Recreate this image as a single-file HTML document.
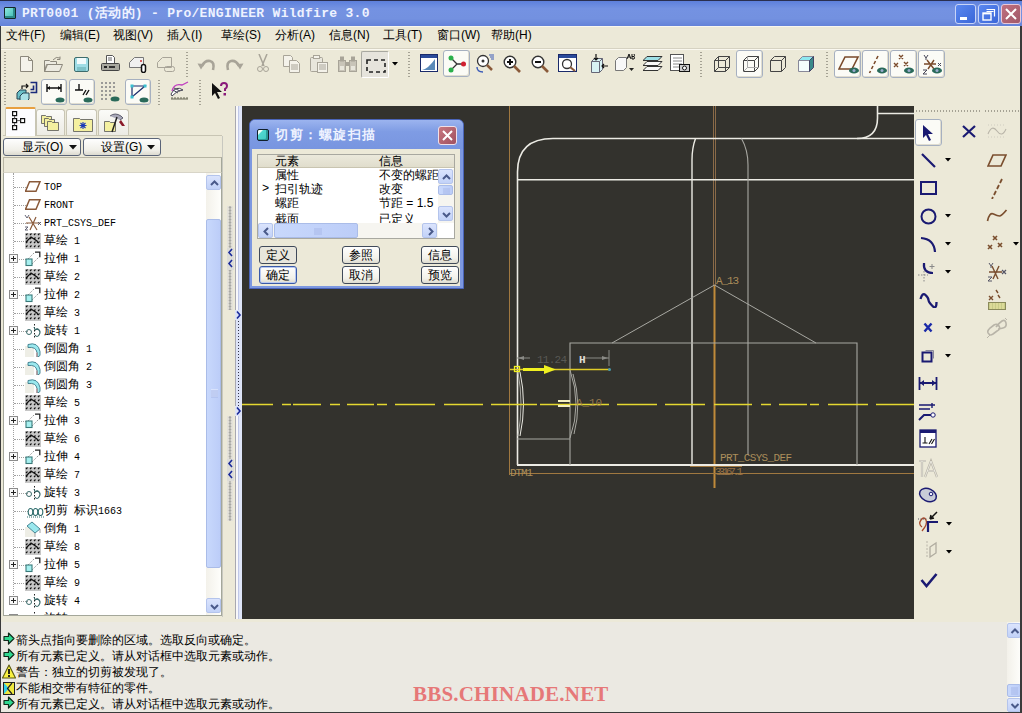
<!DOCTYPE html>
<html><head><meta charset="utf-8">
<style>
*{margin:0;padding:0;box-sizing:border-box}
html,body{width:1022px;height:713px;overflow:hidden;background:#ECE9D8;font-family:"Liberation Sans",sans-serif;font-size:12px;color:#000}
.a{position:absolute}
#title{left:0;top:0;width:1022px;height:26px;background:linear-gradient(#5d80dc,#7492e2 30%,#7391e0 70%,#6482d8);border-top:1px solid #2a2f50}
#title .t{left:22px;top:3px;color:#eef2ff;font-family:"Liberation Mono",monospace;font-weight:bold;font-size:13px;white-space:pre;letter-spacing:0.3px}
#menu{left:0;top:26px;width:1022px;height:22px;background:#ECE9D8}
#menu span{position:absolute;top:1px;font-size:12px}
#canvas{left:242px;top:106px;width:672px;height:513px;background:#33322d;overflow:hidden}
#tree{left:3px;top:173px;width:219px;height:443px;background:#fff;border:1px solid #a4a79a;border-top:none;overflow:hidden}
#msg{left:0;top:620px;width:1022px;height:93px;background:#ECE9D8}
.ti{position:absolute;left:0;height:18px;width:200px;font-size:12px;white-space:pre}
.ti .tx{position:absolute;left:41px;top:2px}
.ml{position:absolute;left:16px;font-size:12px;white-space:pre}
.grip{width:2px;background:repeating-linear-gradient(#a5a294 0 1px,transparent 1px 3px)}
.btp{background:#fbfbf6;border:1px solid #a6b0c0;border-radius:3px;box-shadow:inset -1px -1px 0 #e0ddd0}
.ic svg{display:block}
.ti .hd{position:absolute;left:10px;top:9px;width:14px;border-top:1px dotted #a0a0a0}
.vd{position:absolute;left:9px;top:0;height:432px;border-left:1px dotted #a0a0a0}
.pl{position:absolute;left:5px;top:4px;width:9px;height:9px;border:1px solid #8c8c8c;background:#f8f8f8}
.pl:before{content:"";position:absolute;left:1px;top:3px;width:5px;height:1px;background:#222}
.pl:after{content:"";position:absolute;left:3px;top:1px;width:1px;height:5px;background:#222}
.ti .tx{font-family:"Liberation Mono",monospace;font-size:10px;left:40px;top:4px;line-height:12px}
.sbv{background:linear-gradient(90deg,#f3f1ea,#fefefb)}
.sbb{background:linear-gradient(#dbe4fd,#c2d2f8);border:1px solid #b4c4ec;border-radius:2px}
.sbt{background:linear-gradient(90deg,#c8d8fc,#bccdf8);border:1px solid #aabce8;border-radius:2px}
.tab{background:linear-gradient(#fbfbf8,#ecebe4);border:1px solid #c8c5b4;border-bottom:none;border-radius:3px 3px 0 0}
.btn2{background:linear-gradient(#fefefe,#f0efe8 70%,#dcdad0);border:1px solid #5a6478;border-radius:3px}
.btn2 span{position:absolute;top:0px;font-size:12px;white-space:pre}
.dt{font-size:12px;white-space:pre;line-height:14px}
.dbtn{width:38px;height:18px;background:linear-gradient(#fefefe,#f2f1ea 70%,#dedcd0);border:1px solid #404a5a;border-radius:3px;font-size:12px;text-align:center;line-height:16px}
.grp{background:radial-gradient(circle at 3px 1.5px,#9a9a9a 0 1.3px,#d8d8d4 1.4px) 0 0/6px 3px;border-left:1px solid #c8c8c0}
.cj{font-family:"Liberation Sans",sans-serif;font-size:12px;line-height:0;vertical-align:0}
</style></head><body>
<div id="title" class="a">
  <div class="a" style="left:4px;top:6px;width:12px;height:12px;background:linear-gradient(135deg,#8ee8e0,#3ab8b0);border:1px solid #142828;border-radius:1px;box-shadow:inset -2px -2px 0 #2a8a88"></div>
  <div class="a t">PRT0001 (活动的) - Pro/ENGINEER Wildfire 3.0</div>
  <div class="a" style="left:955px;top:3px;width:21px;height:20px;background:linear-gradient(135deg,#5a88f0,#3a66d8);border:1px solid #c8d4f8;border-radius:3px"><svg width="19" height="18" style="position:absolute;left:0;top:0"><rect x="4" y="12" width="7" height="3" fill="#fff"/></svg></div>
  <div class="a" style="left:978px;top:3px;width:21px;height:20px;background:linear-gradient(135deg,#5a88f0,#3a66d8);border:1px solid #c8d4f8;border-radius:3px"><svg width="19" height="18" style="position:absolute;left:0;top:0"><path d="M7.5 4.5h8v7M7.5 6.5h7" fill="none" stroke="#fff" stroke-width="1.2"/><rect x="4" y="8" width="8" height="7" fill="none" stroke="#fff" stroke-width="1.4"/><path d="M4 8.7h8" stroke="#fff" stroke-width="1.4"/></svg></div>
  <div class="a" style="left:1001px;top:3px;width:20px;height:20px;background:linear-gradient(135deg,#c07080,#a05868);border:1px solid #e8c8d8;border-radius:3px"><svg width="18" height="18" style="position:absolute;left:0;top:0"><path d="M4 4l10 10M14 4l-10 10" stroke="#fff" stroke-width="2"/></svg></div>
</div>
<div id="menu" class="a">
  <span style="left:6px">文件(F)</span>
  <span style="left:60px">编辑(E)</span>
  <span style="left:113px">视图(V)</span>
  <span style="left:167px">插入(I)</span>
  <span style="left:221px">草绘(S)</span>
  <span style="left:275px">分析(A)</span>
  <span style="left:329px">信息(N)</span>
  <span style="left:383px">工具(T)</span>
  <span style="left:437px">窗口(W)</span>
  <span style="left:491px">帮助(H)</span>
</div>

<!-- toolbar row1 -->
<div class="a grip" style="left:4px;top:52px;height:26px"></div>
<div class="a ic" style="left:20px;top:56px"><svg width="14" height="16"><path d="M0.5 0.5h8l4 4v11h-12z M8.5 0.5v4h4" fill="#f4f2ea" stroke="#8c887c"/></svg></div>
<div class="a ic" style="left:44px;top:56px"><svg width="20" height="16"><path d="M0.5 4.5h5l1 1h6v3h-10l-2 7z M0.5 15.5l3-7h15l-3 7z" fill="#eceae0" stroke="#8c887c"/><path d="M9 4q3-4 7-2M16 0.5v3h-3" fill="none" stroke="#8c887c"/></svg></div>
<div class="a ic" style="left:74px;top:57px"><svg width="15" height="15"><rect x="0.5" y="0.5" width="14" height="14" rx="1.5" fill="#9fdde6" stroke="#3e6c6c"/><rect x="3" y="1" width="9" height="6" fill="#f2fbfc"/><rect x="3" y="10" width="9" height="4" fill="#7ec2c8"/></svg></div>
<div class="a ic" style="left:101px;top:55px"><svg width="19" height="17"><path d="M5.5 0.5h6l2 2v6h-8z" fill="#fff" stroke="#555"/><path d="M7 3h4M7 5h4" stroke="#666"/><rect x="0.5" y="8.5" width="18" height="7" rx="1" fill="#a9a9a0" stroke="#444"/><rect x="3" y="11" width="3" height="2" fill="#222"/><rect x="8" y="11" width="6" height="2" fill="#333"/></svg></div>
<div class="a ic" style="left:129px;top:56px"><svg width="19" height="17"><path d="M0.5 6.5l5-5h9v10h-14z" fill="#f0f0f0" stroke="#777"/><circle cx="12" cy="5" r="1" fill="#c33"/><rect x="12.5" y="8.5" width="4" height="8" rx="2" fill="#fff" stroke="#111" stroke-width="1.5"/></svg></div>
<div class="a ic" style="left:157px;top:56px"><svg width="19" height="17"><path d="M0.5 6.5l5-5h9v10h-14z" fill="none" stroke="#a8a498"/><rect x="7.5" y="10.5" width="10" height="5" rx="2" fill="none" stroke="#a8a498"/></svg></div>
<div class="a grip" style="left:186px;top:52px;height:26px"></div>
<div class="a ic" style="left:197px;top:58px"><svg width="19" height="14"><path d="M5 8q3-6 8-5t3 9" fill="none" stroke="#a8a498" stroke-width="2.6"/><path d="M0.5 5.5l7 0.5-3.5 5.5z" fill="#a8a498"/></svg></div>
<div class="a ic" style="left:225px;top:58px"><svg width="19" height="14"><path d="M14 8q-3-6-8-5t-3 9" fill="none" stroke="#a8a498" stroke-width="2.6"/><path d="M18.5 5.5l-7 0.5 3.5 5.5z" fill="#a8a498"/></svg></div>
<div class="a ic" style="left:257px;top:54px"><svg width="12" height="19"><path d="M2 0l5 12M10 0l-5 12" stroke="#a8a498" stroke-width="1.5"/><circle cx="3" cy="15" r="2.5" fill="none" stroke="#a8a498"/><circle cx="9" cy="15" r="2.5" fill="none" stroke="#a8a498"/></svg></div>
<div class="a ic" style="left:283px;top:55px"><svg width="18" height="18"><path d="M0.5 0.5h7l2 2v9h-9z" fill="#f4f2ea" stroke="#a8a498"/><path d="M6.5 5.5h7l3 3v9h-10z" fill="#f4f2ea" stroke="#a8a498"/><path d="M8 10h7M8 12h7M8 14h7" stroke="#a8a498"/></svg></div>
<div class="a ic" style="left:310px;top:55px"><svg width="19" height="18"><rect x="0.5" y="2.5" width="12" height="14" rx="1" fill="#e8e6dc" stroke="#a8a498"/><rect x="3.5" y="0.5" width="6" height="3" fill="#f4f2ea" stroke="#a8a498"/><rect x="7.5" y="7.5" width="10" height="10" fill="#f4f2ea" stroke="#a8a498"/><path d="M9 10h7M9 12h7M9 14h7" stroke="#a8a498"/></svg></div>
<div class="a ic" style="left:338px;top:56px"><svg width="19" height="16"><rect x="0.5" y="4.5" width="7" height="11" fill="#c8c4b8" stroke="#a8a498"/><rect x="11.5" y="4.5" width="7" height="11" fill="#c8c4b8" stroke="#a8a498"/><rect x="2" y="0.5" width="4" height="5" fill="#a8a498"/><rect x="13" y="0.5" width="4" height="5" fill="#a8a498"/><rect x="7" y="6" width="5" height="4" fill="#a8a498"/><rect x="2" y="10" width="4" height="4" fill="#e8e6dc"/><rect x="13" y="10" width="4" height="4" fill="#e8e6dc"/></svg></div>
<div class="a" style="left:361px;top:51px;width:28px;height:27px;background:#e6e4dc;border:1px solid #a8a8a0;border-right-color:#fff;border-bottom-color:#fff;border-radius:2px"></div>
<div class="a ic" style="left:366px;top:59px"><svg width="20" height="14"><rect x="1" y="1" width="18" height="12" fill="none" stroke="#222" stroke-width="1.6" stroke-dasharray="4 3"/></svg></div>
<div class="a ic" style="left:392px;top:62px"><svg width="6" height="4"><path d="M0 0h6l-3 3.5z" fill="#000"/></svg></div>
<div class="a grip" style="left:408px;top:52px;height:26px"></div>
<div class="a ic" style="left:420px;top:54px"><svg width="18" height="18"><rect x="0.5" y="0.5" width="17" height="17" fill="#fff" stroke="#1a2a6a"/><rect x="1" y="1" width="16" height="3" fill="#2a4a9a"/><path d="M2 16q6-1 13-11v11z" fill="#5a8ab8"/><path d="M4 14l2-2M7 12l2-3M10 10l2-3" stroke="#fff"/></svg></div>
<div class="a btp" style="left:443px;top:50px;width:27px;height:27px"></div>
<div class="a ic" style="left:448px;top:55px"><svg width="18" height="18"><path d="M3 3l6 6h8M9 9l-6 6" stroke="#333" stroke-width="1.3" fill="none"/><circle cx="3" cy="3" r="2.5" fill="#2ab04a"/><circle cx="3" cy="15" r="2.5" fill="#2ab04a"/><circle cx="15.5" cy="9" r="2.5" fill="#d02030"/></svg></div>
<div class="a ic" style="left:476px;top:54px"><svg width="20" height="19"><circle cx="7" cy="7" r="5.5" fill="#fff" stroke="#333" stroke-width="1.3"/><path d="M11 11l5 5" stroke="#8a5a3a" stroke-width="2.5"/><circle cx="7" cy="7" r="1.5" fill="#333"/><path d="M13 1h5M14 3h4M15 5h3" stroke="#3a5ab8"/><path d="M1 13q0 5 6 5" fill="none" stroke="#3a5ab8" stroke-width="1.4"/></svg></div>
<div class="a ic" style="left:503px;top:55px"><svg width="18" height="18"><circle cx="7" cy="7" r="5.8" fill="#fff" stroke="#333" stroke-width="1.4"/><path d="M4 7h6M7 4v6" stroke="#111" stroke-width="2"/><path d="M11 11l6 6" stroke="#8a5a3a" stroke-width="2.6"/></svg></div>
<div class="a ic" style="left:531px;top:55px"><svg width="18" height="18"><circle cx="7" cy="7" r="5.8" fill="#fff" stroke="#333" stroke-width="1.4"/><path d="M4 7h6" stroke="#111" stroke-width="2"/><path d="M11 11l6 6" stroke="#8a5a3a" stroke-width="2.6"/></svg></div>
<div class="a ic" style="left:558px;top:54px"><svg width="20" height="18"><rect x="0.5" y="0.5" width="18" height="17" fill="#fff" stroke="#1a2a6a"/><rect x="1" y="1" width="17" height="3" fill="#2a4a9a"/><circle cx="9" cy="10" r="4.5" fill="none" stroke="#333" stroke-width="1.3"/><path d="M12 13l5 4" stroke="#8a5a3a" stroke-width="2.2"/></svg></div>
<div class="a ic" style="left:590px;top:54px"><svg width="19" height="19"><path d="M1.5 7.5l3-3h8v11l-3 3h-8z" fill="#d8f2f4" stroke="#667"/><path d="M1.5 7.5h8v11M9.5 7.5l3-3" fill="none" stroke="#667"/><path d="M6 0v6M4 4l2 2 2-2" stroke="#111" fill="none" stroke-width="1.2"/><path d="M18 12h-6M14 10l-2 2 2 2" stroke="#111" fill="none" stroke-width="1.2"/></svg></div>
<div class="a ic" style="left:615px;top:54px"><svg width="21" height="19"><path d="M0.5 6.5l3-3h8v10l-3 3h-8z" fill="#f8f8f8" stroke="#777"/><path d="M12 5l2-5 2 5M13 3h2M17 0v5h2q1-1 0-2.5h-2M17 2.5h2q1-1 0-2.5" fill="none" stroke="#111" stroke-width="1"/><path d="M14 14h5l-2.5 3z" fill="#222"/></svg></div>
<div class="a ic" style="left:643px;top:56px"><svg width="20" height="16"><path d="M4 0.5h15l-4 4h-15z" fill="#9ee0e6" stroke="#333"/><path d="M4 5.5h15l-4 4h-15z" fill="#f8f8f8" stroke="#333"/><path d="M4 10.5h15l-4 4h-15z" fill="#f8f8f8" stroke="#333"/></svg></div>
<div class="a ic" style="left:670px;top:54px"><svg width="21" height="19"><rect x="0.5" y="0.5" width="13" height="16" fill="#fff" stroke="#555"/><path d="M3 4h9M3 7h9M3 10h9M3 13h9" stroke="#888"/><rect x="9.5" y="10.5" width="10" height="7" fill="#ccc" stroke="#111"/><circle cx="14.5" cy="14" r="2" fill="#fff" stroke="#111"/></svg></div>
<div class="a grip" style="left:700px;top:52px;height:26px"></div>
<div class="a ic" style="left:714px;top:56px"><svg width="16" height="16"><path d="M0.5 4.5h11v11h-11zM4.5 0.5h11v11h-11zM0.5 4.5l4-4M11.5 4.5l4-4M11.5 15.5l4-4M0.5 15.5l4-4" fill="none" stroke="#444"/></svg></div>
<div class="a btp" style="left:736px;top:50px;width:27px;height:28px"></div>
<div class="a ic" style="left:743px;top:56px"><svg width="16" height="16"><path d="M0.5 4.5h11v11h-11zM0.5 4.5l4-4h11v11l-4 4M11.5 4.5l4-4" fill="none" stroke="#444"/><path d="M4.5 0.5v11h11M0.5 15.5l4-4" fill="none" stroke="#aaa"/></svg></div>
<div class="a ic" style="left:770px;top:56px"><svg width="16" height="16"><path d="M0.5 4.5h11v11h-11zM0.5 4.5l4-4h11v11l-4 4M11.5 4.5l4-4" fill="none" stroke="#444"/></svg></div>
<div class="a ic" style="left:798px;top:56px"><svg width="16" height="16"><path d="M0.5 4.5h11v11h-11z" fill="#f4fcfc" stroke="#889"/><path d="M0.5 4.5l4-4h11l-4 4z" fill="#8ee8f0" stroke="#889"/><path d="M11.5 4.5l4-4v11l-4 4z" fill="#3a8a8a" stroke="#446"/></svg></div>
<div class="a grip" style="left:826px;top:52px;height:26px"></div>
<div class="a btp" style="left:834px;top:50px;width:27px;height:28px"></div>
<div class="a btp" style="left:862px;top:50px;width:27px;height:28px"></div>
<div class="a btp" style="left:890px;top:50px;width:27px;height:28px"></div>
<div class="a btp" style="left:918px;top:50px;width:27px;height:28px"></div>
<div class="a ic" style="left:838px;top:55px"><svg width="22" height="20"><path d="M7 2h13l-6 12h-13z" fill="none" stroke="#7a4a2a" stroke-width="1.6"/><ellipse cx="16" cy="15.5" rx="5" ry="3" fill="#2a6a5a"/><circle cx="16" cy="15.5" r="1.5" fill="#9ac"/></svg></div>
<div class="a ic" style="left:866px;top:55px"><svg width="22" height="20"><path d="M12 1l-1.5 3M9.5 6l-1.5 3M7 11l-1.5 3M4.5 16l-1 2" stroke="#7a4a2a" stroke-width="1.6"/><ellipse cx="16" cy="15.5" rx="5" ry="3" fill="#2a6a5a"/><circle cx="16" cy="15.5" r="1.5" fill="#9ac"/></svg></div>
<div class="a ic" style="left:893px;top:54px"><svg width="22" height="21"><path d="M6 1l4 4M10 1l-4 4M1 9l4 4M5 9l-4 4M11 8l4 4M15 8l-4 4" stroke="#7a4a2a" stroke-width="1.4"/><ellipse cx="16" cy="16.5" rx="5" ry="3" fill="#2a6a5a"/><circle cx="16" cy="16.5" r="1.5" fill="#9ac"/></svg></div>
<div class="a ic" style="left:921px;top:54px"><svg width="22" height="21"><path d="M3 1l2 3 2-3M5 4v2" stroke="#445" fill="none"/><path d="M3 10h12M6 6l7 9M13 6l-6 9" stroke="#7a4a2a" stroke-width="1.4"/><path d="M2 16h4l-4 4h4" stroke="#445" fill="none"/><path d="M17 9l3 3M20 9l-3 3" stroke="#445"/><ellipse cx="16" cy="16.5" rx="5" ry="3" fill="#2a6a5a"/><circle cx="16" cy="16.5" r="1.5" fill="#9ac"/></svg></div>
<!-- toolbar row2 -->
<div class="a grip" style="left:4px;top:80px;height:26px"></div>
<div class="a ic" style="left:16px;top:81px"><svg width="22" height="19"><path d="M14.5 1.5h6v10h-6M17.5 4.5v4h-3" fill="none" stroke="#1a2a7a" stroke-width="1.6"/><path d="M6 8v-3h6M10 3l2 2-2 2" stroke="#111" fill="none" stroke-width="1.2"/><path d="M1 12l3-3h6v6l-3 3h-6z" fill="#6ac0c8" stroke="#245"/><path d="M4 15l3-3h6v6l-3 3h-6z" fill="#a8e0e6" stroke="#245"/></svg></div>
<div class="a btp" style="left:41px;top:79px;width:26px;height:26px"></div>
<div class="a btp" style="left:69px;top:79px;width:26px;height:26px"></div>
<div class="a btp" style="left:125px;top:79px;width:26px;height:26px"></div>
<div class="a ic" style="left:46px;top:83px"><svg width="20" height="20"><path d="M1 1v8M15 1v8M1 5h14" stroke="#111" stroke-width="1.4"/><path d="M1 5l3-2v4zM15 5l-3-2v4z" fill="#111"/><ellipse cx="14" cy="17" rx="4.5" ry="2.5" fill="#2a6a5a"/></svg></div>
<div class="a ic" style="left:74px;top:83px"><svg width="20" height="20"><path d="M5 1v6M1 7h8M9 12l3-5M12 12l3-5" stroke="#111" stroke-width="1.4"/><ellipse cx="14" cy="17" rx="4.5" ry="2.5" fill="#2a6a5a"/></svg></div>
<div class="a ic" style="left:101px;top:82px"><svg width="20" height="20"><g fill="#334"><circle cx="1" cy="1" r=".8"/><circle cx="5" cy="1" r=".8"/><circle cx="9" cy="1" r=".8"/><circle cx="13" cy="1" r=".8"/><circle cx="1" cy="5" r=".8"/><circle cx="5" cy="5" r=".8"/><circle cx="9" cy="5" r=".8"/><circle cx="13" cy="5" r=".8"/><circle cx="1" cy="9" r=".8"/><circle cx="5" cy="9" r=".8"/><circle cx="9" cy="9" r=".8"/><circle cx="13" cy="9" r=".8"/><circle cx="1" cy="13" r=".8"/><circle cx="5" cy="13" r=".8"/><circle cx="9" cy="13" r=".8"/><circle cx="1" cy="17" r=".8"/><circle cx="5" cy="17" r=".8"/></g><ellipse cx="14" cy="17" rx="4.5" ry="2.5" fill="#2a6a5a"/></svg></div>
<div class="a ic" style="left:130px;top:83px"><svg width="20" height="20"><path d="M2 3h13L2 14z" fill="none" stroke="#1a2a6a" stroke-width="1.2"/><rect x="0.5" y="1.5" width="3" height="3" fill="#3ac0d0"/><rect x="13.5" y="1.5" width="3" height="3" fill="#3ac0d0"/><rect x="0.5" y="12.5" width="3" height="3" fill="#3ac0d0"/><ellipse cx="14" cy="17" rx="4.5" ry="2.5" fill="#2a6a5a"/></svg></div>
<div class="a grip" style="left:158px;top:80px;height:26px"></div>
<div class="a ic" style="left:170px;top:81px"><svg width="20" height="20"><path d="M2 10q2-8 10-6l6-3" fill="none" stroke="#c040c0" stroke-width="1.3"/><path d="M1 13q5-9 12-4q-6 0-11 6z" fill="#fff" stroke="#445"/><path d="M3 9l5 3M4 7l6 3" stroke="#445"/><path d="M1 18h17M2 16v2M5 16v2M8 16v2M11 16v2M14 16v2M17 16v2" stroke="#665"/></svg></div>
<div class="a grip" style="left:199px;top:80px;height:26px"></div>
<div class="a ic" style="left:211px;top:82px"><svg width="18" height="18"><path d="M1 1v13l3-3 3 6 2-1-3-6h5z" fill="#111"/><path d="M10 4q0-3 3-3t3 3q0 2-2 3v2" fill="none" stroke="#8a1a7a" stroke-width="2"/><rect x="12.5" y="11" width="2.5" height="2.5" fill="#8a1a7a"/></svg></div>

<div class="a" style="left:1px;top:48px;width:1020px;height:1px;background:#d6d2c2"></div><div class="a" style="left:1px;top:49px;width:1020px;height:1px;background:#faf8f0"></div><div class="a" style="left:1px;top:26px;width:1020px;height:1px;background:#f8f6ee"></div>
<div id="canvas" class="a"><svg width="672" height="513" style="position:absolute;left:0;top:0">
<g fill="none" stroke-linecap="butt">
<!-- orange datum lines -->
<path d="M267.5 0V369" stroke="#a07840" stroke-width="1"/>
<path d="M471.5 0V179M473.5 0V179" stroke="#8a6a48" stroke-width="1"/>
<path d="M472.5 179V382" stroke="#c08a3a" stroke-width="2"/>
<path d="M268 367.5H672" stroke="#a07840" stroke-width="1"/>
<path d="M448 360.5H500" stroke="#a07840" stroke-width="1"/>
<!-- white geometry -->
<path d="M275.5 359V66Q275.5 32.5 311 32.5H672" stroke="#ecebe4" stroke-width="1.6"/>
<path d="M275.5 73.69999999999999H672" stroke="#ecebe4" stroke-width="1.5"/>
<path d="M635.5 0V12Q635.5 32.5 615 32.5" stroke="#ecebe4" stroke-width="1.6"/>
<path d="M636 7.5H672" stroke="#ecebe4" stroke-width="1.5"/>
<path d="M453.5 32.5Q450 42 450 54V359" stroke="#ecebe4" stroke-width="1.4"/>
<path d="M499.5 32.5Q506 44 506 59V349" stroke="#a8a8a2" stroke-width="1.1"/>
<path d="M275 359H672" stroke="#ecebe4" stroke-width="1.8"/>
<!-- gray rect & triangle -->
<path d="M328 359V237H615V359" stroke="#a8a8a2" stroke-width="1.1"/>
<path d="M370 237L472.5 179L574 237" stroke="#a8a8a2" stroke-width="1"/>
<path d="M275 333H328" stroke="#a8a8a2" stroke-width="1.1"/>
<!-- profile curves -->
<path d="M276 266Q282 298 276 330" stroke="#a8a8a2" stroke-width="1"/>
<path d="M278 266Q285 298 278 330" stroke="#ecebe4" stroke-width="1"/>
<path d="M328 264Q340 298 328 332" stroke="#a8a8a2" stroke-width="1"/>
<path d="M331 268Q340 298 332 328" stroke="#a8a8a2" stroke-width="1"/>
<!-- centerline -->
<path d="M0 298.5H31M40 298.5H49M51 298.5H79M88 298.5H98M105 298.5H132M135 298.5H145M153 298.5H193M202 298.5H241M249 298.5H295M298 298.5H367M375 298.5H415M423 298.5H463M472 298.5H510M519 298.5H529M537 298.5H565M568 298.5H577M586 298.5H626M634 298.5H672" stroke="#e4d830" stroke-width="1.6"/>
<!-- dimension -->
<path d="M275 252H288M341 252H367M367 244V260" stroke="#8a8a86" stroke-width="1"/>
<path d="M276 252l6 -2v4z M366 252l-6 -2v4z" fill="#8a8a86" stroke="none"/>
<!-- yellow traj arrow -->
<path d="M268 263.5H368" stroke="#e0cc28" stroke-width="1.5"/>
<path d="M281 263.5H306" stroke="#f0f020" stroke-width="3"/>
<path d="M302 259L314 263.5L302 268z" fill="#f0f020" stroke="none"/>
<rect x="272.5" y="260.5" width="5" height="5" stroke="#f0f020" stroke-width="1.3"/>
<circle cx="367.5" cy="263.5" r="1.5" fill="#4a9aaa" stroke="none"/>
<path d="M316 295H328M316 300H328" stroke="#f4f0c0" stroke-width="2"/>
</g>
<g font-family="Liberation Mono, monospace" font-size="11" fill="#b89860" opacity="0.9">
<text x="474" y="178" textLength="23">A_13</text>
<text x="334" y="300" textLength="26" fill="#a08050">A_10</text>
<text x="478" y="355" textLength="72">PRT_CSYS_DEF</text>
<text x="268" y="370" textLength="23">DTM1</text>
<text x="473" y="369" textLength="28" fill="#a07848">33167.1</text>
<text x="295" y="257" textLength="30" fill="#5e5e5a">11.24</text>
<text x="337" y="257" font-weight="bold" fill="#f0f0e8">H</text>
</g>
</svg></div>

<!-- left panel top -->
<div class="a" style="left:3px;top:135px;width:219px;height:1px;background:#c8c5b4"></div>
<div class="a" style="left:5px;top:107px;width:31px;height:29px;background:#fcfcfe;border:1px solid #c8c5b4;border-bottom:none;border-top:2px solid #e8a040;border-radius:2px 2px 0 0"></div>
<div class="a tab" style="left:36px;top:109px;width:29px;height:26px"></div>
<div class="a tab" style="left:66px;top:109px;width:31px;height:26px"></div>
<div class="a tab" style="left:98px;top:109px;width:31px;height:26px"></div>
<div class="a ic" style="left:12px;top:111px"><svg width="14" height="20"><g fill="#fff" stroke="#111" stroke-width="1.2"><rect x="0.6" y="0.6" width="4" height="4"/><rect x="0.6" y="7.6" width="4" height="4"/><rect x="8.6" y="7.6" width="4" height="4"/><rect x="0.6" y="14.6" width="4" height="4"/></g><path d="M2.6 5v2.5M2.6 12v2.5M5 9.6h3.5" stroke="#555"/></svg></div>
<div class="a ic" style="left:41px;top:113px"><svg width="19" height="19"><g stroke="#555" stroke-width=".8"><path d="M0.5 2.5h4l1 1h5v7h-10z" fill="#f4f0a0"/><path d="M3.5 5.5h4l1 1h5v7h-10z" fill="#f4f0a0"/><path d="M6.5 8.5h4l1 1h6v8h-11z" fill="#f4f0a0"/></g></svg></div>
<div class="a ic" style="left:73px;top:116px"><svg width="20" height="16"><path d="M0.5 2.5h6l1 1h12v12h-19z" fill="#f4f0a0" stroke="#555" stroke-width=".8"/><path d="M10 6v7M6.5 9.5h7M7.5 7l5 5M12.5 7l-5 5" stroke="#1a3ab8" stroke-width="1.1"/></svg></div>
<div class="a ic" style="left:104px;top:113px"><svg width="22" height="20"><path d="M0.5 8.5h5l1 1h5v9h-11z" fill="#f4f0a0" stroke="#555" stroke-width=".8"/><path d="M6 3q5-4 11 0l2 2-3 2" fill="#a8a8b8" stroke="#445" stroke-width=".8"/><path d="M13 4l-5 15" stroke="#222" stroke-width="1.5"/><path d="M17 7l4 6h-3l-3-4z" fill="#8a1a2a"/></svg></div>
<div class="a btn2" style="left:3px;top:138px;width:78px;height:18px"><span style="left:18px">显示(O)</span><svg style="position:absolute;left:65px;top:6px" width="8" height="5"><path d="M0 0h8l-4 4.5z" fill="#111"/></svg></div>
<div class="a btn2" style="left:83px;top:138px;width:78px;height:18px"><span style="left:17px">设置(G)</span><svg style="position:absolute;left:63px;top:6px" width="8" height="5"><path d="M0 0h8l-4 4.5z" fill="#111"/></svg></div>
<div class="a" style="left:3px;top:157px;width:219px;height:16px;background:#ebe8d8;border:1px solid #b8b5a4;border-bottom:1px solid #d8d5c8;border-right:1px solid #a4a79a"></div>
<!-- sash -->
<div class="a" style="left:222px;top:136px;width:1px;height:481px;background:#c8c8c0"></div>
<div class="a" style="left:235px;top:106px;width:1px;height:513px;background:#a8a8b0"></div>
<div class="a" style="left:236px;top:106px;width:2px;height:513px;background:#f8f8fa"></div>
<div class="a" style="left:238px;top:106px;width:1px;height:513px;background:#c0c8e8"></div>
<div class="a" style="left:239px;top:106px;width:3px;height:513px;background:#dfe5f8"></div>
<svg class="a" style="left:227px;top:206px" width="6" height="104"><defs><pattern id="gp206" width="6" height="3" patternUnits="userSpaceOnUse"><rect width="6" height="3" fill="#e4e2da"/><circle cx="3" cy="1.5" r="1.3" fill="#a8a8a4"/></pattern></defs><rect width="6" height="104" fill="url(#gp206)"/></svg>
<svg class="a" style="left:227px;top:416px" width="6" height="105"><defs><pattern id="gp416" width="6" height="3" patternUnits="userSpaceOnUse"><rect width="6" height="3" fill="#e4e2da"/><circle cx="3" cy="1.5" r="1.3" fill="#a8a8a4"/></pattern></defs><rect width="6" height="105" fill="url(#gp416)"/></svg>
<div class="a" style="left:236px;top:318px;width:5px;height:88px;background:#dce2f6"></div>
<div class="a" style="left:238px;top:318px;width:1px;height:88px;background:repeating-linear-gradient(#334 0 1px,transparent 1px 3px)"></div>
<svg class="a" style="left:226px;top:248px" width="9" height="22"><rect x="1" y="0" width="7" height="22" fill="#dcdcd8"/><path d="M6 1l-3 3.5 3 3.5M6 12l-3 3.5 3 3.5" fill="none" stroke="#1a2a9a" stroke-width="1.6"/></svg>
<svg class="a" style="left:226px;top:459px" width="9" height="22"><rect x="1" y="0" width="7" height="22" fill="#dcdcd8"/><path d="M6 1l-3 3.5 3 3.5M6 12l-3 3.5 3 3.5" fill="none" stroke="#1a2a9a" stroke-width="1.6"/></svg>
<svg class="a" style="left:235px;top:310px" width="7" height="10"><rect width="7" height="10" fill="#dce2f6"/><path d="M2 1.5l3 3.5-3 3.5" fill="none" stroke="#1a2a9a" stroke-width="1.6"/></svg>
<svg class="a" style="left:235px;top:406px" width="7" height="10"><rect width="7" height="10" fill="#dce2f6"/><path d="M2 1.5l3 3.5-3 3.5" fill="none" stroke="#1a2a9a" stroke-width="1.6"/></svg>
<div id="tree" class="a"><div class="vd"></div><div class="ti" style="top:5px"><div class="hd"></div><div class="a" style="left:21px;top:3px"><svg width="16" height="11"><path d="M4.5 0.8h10.5l-4 9.4h-10.5z" fill="none" stroke="#8a5a3a" stroke-width="1.5"/></svg></div><div class="tx">TOP</div></div><div class="ti" style="top:23px"><div class="hd"></div><div class="a" style="left:21px;top:3px"><svg width="16" height="11"><path d="M4.5 0.8h10.5l-4 9.4h-10.5z" fill="none" stroke="#8a5a3a" stroke-width="1.5"/></svg></div><div class="tx">FRONT</div></div><div class="ti" style="top:41px"><div class="hd"></div><div class="a" style="left:20px;top:1px"><svg width="18" height="16"><path d="M2 8h14M5 2l8 13M12 2l-6 13" stroke="#8a5a3a" stroke-width="1.2"/><path d="M1 0l2 3 2-3M14 7l3 3M17 7l-3 3M1 12h3l-3 3h3" stroke="#556" fill="none" stroke-width=".9"/></svg></div><div class="tx">PRT_CSYS_DEF</div></div><div class="ti" style="top:59px"><div class="hd"></div><div class="a" style="left:21px;top:1px"><svg width="16" height="16"><rect width="16" height="16" fill="#c6c6c6"/><path d="M1 2l1.5-1.5M5 2l1.5-1.5M9 2l1.5-1.5M13 2l1.5-1.5M1 6l1.5-1.5M5 6l1.5-1.5M9 6l1.5-1.5M13 6l1.5-1.5M1 10l1.5-1.5M5 10l1.5-1.5M9 10l1.5-1.5M13 10l1.5-1.5M1 14l1.5-1.5M5 14l1.5-1.5M9 14l1.5-1.5M13 14l1.5-1.5" stroke="#111" stroke-width="1.1"/><path d="M1 9l5-5 6 4 1 2" fill="none" stroke="#111" stroke-width="1.3"/></svg></div><div class="tx"><span class="cj">草绘</span> 1</div></div><div class="ti" style="top:77px"><div class="hd"></div><div class="pl"></div><div class="a" style="left:21px;top:1px"><svg width="18" height="16"><path d="M3 8l6-6M7 13l7-7" fill="none" stroke="#888" stroke-dasharray="1.2 1.2"/><path d="M10 1.2h4.8v5" fill="none" stroke="#222" stroke-width="1.3"/><rect x="1" y="8" width="6" height="6.5" fill="#a8f0f0" stroke="#3a7a7a" stroke-width="1.1"/></svg></div><div class="tx"><span class="cj">拉伸</span> 1</div></div><div class="ti" style="top:95px"><div class="hd"></div><div class="a" style="left:21px;top:1px"><svg width="16" height="16"><rect width="16" height="16" fill="#c6c6c6"/><path d="M1 2l1.5-1.5M5 2l1.5-1.5M9 2l1.5-1.5M13 2l1.5-1.5M1 6l1.5-1.5M5 6l1.5-1.5M9 6l1.5-1.5M13 6l1.5-1.5M1 10l1.5-1.5M5 10l1.5-1.5M9 10l1.5-1.5M13 10l1.5-1.5M1 14l1.5-1.5M5 14l1.5-1.5M9 14l1.5-1.5M13 14l1.5-1.5" stroke="#111" stroke-width="1.1"/><path d="M1 9l5-5 6 4 1 2" fill="none" stroke="#111" stroke-width="1.3"/></svg></div><div class="tx"><span class="cj">草绘</span> 2</div></div><div class="ti" style="top:113px"><div class="hd"></div><div class="pl"></div><div class="a" style="left:21px;top:1px"><svg width="18" height="16"><path d="M3 8l6-6M7 13l7-7" fill="none" stroke="#888" stroke-dasharray="1.2 1.2"/><path d="M10 1.2h4.8v5" fill="none" stroke="#222" stroke-width="1.3"/><rect x="1" y="8" width="6" height="6.5" fill="#a8f0f0" stroke="#3a7a7a" stroke-width="1.1"/></svg></div><div class="tx"><span class="cj">拉伸</span> 2</div></div><div class="ti" style="top:131px"><div class="hd"></div><div class="a" style="left:21px;top:1px"><svg width="16" height="16"><rect width="16" height="16" fill="#c6c6c6"/><path d="M1 2l1.5-1.5M5 2l1.5-1.5M9 2l1.5-1.5M13 2l1.5-1.5M1 6l1.5-1.5M5 6l1.5-1.5M9 6l1.5-1.5M13 6l1.5-1.5M1 10l1.5-1.5M5 10l1.5-1.5M9 10l1.5-1.5M13 10l1.5-1.5M1 14l1.5-1.5M5 14l1.5-1.5M9 14l1.5-1.5M13 14l1.5-1.5" stroke="#111" stroke-width="1.1"/><path d="M1 9l5-5 6 4 1 2" fill="none" stroke="#111" stroke-width="1.3"/></svg></div><div class="tx"><span class="cj">草绘</span> 3</div></div><div class="ti" style="top:149px"><div class="hd"></div><div class="pl"></div><div class="a" style="left:21px;top:2px"><svg width="18" height="14"><path d="M9.5 0v14" stroke="#222" stroke-dasharray="1.5 1.5"/><circle cx="4" cy="8" r="2.5" fill="none" stroke="#3a6a6a"/><path d="M10 6q2-2 4 0t0 5-4 0" fill="none" stroke="#3a6a6a" stroke-width="1.2"/><path d="M9 3l1 3 3-1" fill="none" stroke="#3a6a6a"/></svg></div><div class="tx"><span class="cj">旋转</span> 1</div></div><div class="ti" style="top:167px"><div class="hd"></div><div class="a" style="left:21px;top:1px"><svg width="17" height="16"><rect x="0" y="5" width="9" height="11" fill="#eeeee6"/><path d="M3 3.5q10-3 12 7l0 4-3 2 0-5q-1-6-9-5z" fill="#9ae8ee" stroke="#3a7a8a" stroke-width=".9"/><path d="M12 11.5v4.5" stroke="#c08080" stroke-width="1"/></svg></div><div class="tx"><span class="cj">倒圆角</span> 1</div></div><div class="ti" style="top:185px"><div class="hd"></div><div class="a" style="left:21px;top:1px"><svg width="17" height="16"><rect x="0" y="5" width="9" height="11" fill="#eeeee6"/><path d="M3 3.5q10-3 12 7l0 4-3 2 0-5q-1-6-9-5z" fill="#9ae8ee" stroke="#3a7a8a" stroke-width=".9"/><path d="M12 11.5v4.5" stroke="#c08080" stroke-width="1"/></svg></div><div class="tx"><span class="cj">倒圆角</span> 2</div></div><div class="ti" style="top:203px"><div class="hd"></div><div class="a" style="left:21px;top:1px"><svg width="17" height="16"><rect x="0" y="5" width="9" height="11" fill="#eeeee6"/><path d="M3 3.5q10-3 12 7l0 4-3 2 0-5q-1-6-9-5z" fill="#9ae8ee" stroke="#3a7a8a" stroke-width=".9"/><path d="M12 11.5v4.5" stroke="#c08080" stroke-width="1"/></svg></div><div class="tx"><span class="cj">倒圆角</span> 3</div></div><div class="ti" style="top:221px"><div class="hd"></div><div class="a" style="left:21px;top:1px"><svg width="16" height="16"><rect width="16" height="16" fill="#c6c6c6"/><path d="M1 2l1.5-1.5M5 2l1.5-1.5M9 2l1.5-1.5M13 2l1.5-1.5M1 6l1.5-1.5M5 6l1.5-1.5M9 6l1.5-1.5M13 6l1.5-1.5M1 10l1.5-1.5M5 10l1.5-1.5M9 10l1.5-1.5M13 10l1.5-1.5M1 14l1.5-1.5M5 14l1.5-1.5M9 14l1.5-1.5M13 14l1.5-1.5" stroke="#111" stroke-width="1.1"/><path d="M1 9l5-5 6 4 1 2" fill="none" stroke="#111" stroke-width="1.3"/></svg></div><div class="tx"><span class="cj">草绘</span> 5</div></div><div class="ti" style="top:239px"><div class="hd"></div><div class="pl"></div><div class="a" style="left:21px;top:1px"><svg width="18" height="16"><path d="M3 8l6-6M7 13l7-7" fill="none" stroke="#888" stroke-dasharray="1.2 1.2"/><path d="M10 1.2h4.8v5" fill="none" stroke="#222" stroke-width="1.3"/><rect x="1" y="8" width="6" height="6.5" fill="#a8f0f0" stroke="#3a7a7a" stroke-width="1.1"/></svg></div><div class="tx"><span class="cj">拉伸</span> 3</div></div><div class="ti" style="top:257px"><div class="hd"></div><div class="a" style="left:21px;top:1px"><svg width="16" height="16"><rect width="16" height="16" fill="#c6c6c6"/><path d="M1 2l1.5-1.5M5 2l1.5-1.5M9 2l1.5-1.5M13 2l1.5-1.5M1 6l1.5-1.5M5 6l1.5-1.5M9 6l1.5-1.5M13 6l1.5-1.5M1 10l1.5-1.5M5 10l1.5-1.5M9 10l1.5-1.5M13 10l1.5-1.5M1 14l1.5-1.5M5 14l1.5-1.5M9 14l1.5-1.5M13 14l1.5-1.5" stroke="#111" stroke-width="1.1"/><path d="M1 9l5-5 6 4 1 2" fill="none" stroke="#111" stroke-width="1.3"/></svg></div><div class="tx"><span class="cj">草绘</span> 6</div></div><div class="ti" style="top:275px"><div class="hd"></div><div class="pl"></div><div class="a" style="left:21px;top:1px"><svg width="18" height="16"><path d="M3 8l6-6M7 13l7-7" fill="none" stroke="#888" stroke-dasharray="1.2 1.2"/><path d="M10 1.2h4.8v5" fill="none" stroke="#222" stroke-width="1.3"/><rect x="1" y="8" width="6" height="6.5" fill="#a8f0f0" stroke="#3a7a7a" stroke-width="1.1"/></svg></div><div class="tx"><span class="cj">拉伸</span> 4</div></div><div class="ti" style="top:293px"><div class="hd"></div><div class="a" style="left:21px;top:1px"><svg width="16" height="16"><rect width="16" height="16" fill="#c6c6c6"/><path d="M1 2l1.5-1.5M5 2l1.5-1.5M9 2l1.5-1.5M13 2l1.5-1.5M1 6l1.5-1.5M5 6l1.5-1.5M9 6l1.5-1.5M13 6l1.5-1.5M1 10l1.5-1.5M5 10l1.5-1.5M9 10l1.5-1.5M13 10l1.5-1.5M1 14l1.5-1.5M5 14l1.5-1.5M9 14l1.5-1.5M13 14l1.5-1.5" stroke="#111" stroke-width="1.1"/><path d="M1 9l5-5 6 4 1 2" fill="none" stroke="#111" stroke-width="1.3"/></svg></div><div class="tx"><span class="cj">草绘</span> 7</div></div><div class="ti" style="top:311px"><div class="hd"></div><div class="pl"></div><div class="a" style="left:21px;top:2px"><svg width="18" height="14"><path d="M9.5 0v14" stroke="#222" stroke-dasharray="1.5 1.5"/><circle cx="4" cy="8" r="2.5" fill="none" stroke="#3a6a6a"/><path d="M10 6q2-2 4 0t0 5-4 0" fill="none" stroke="#3a6a6a" stroke-width="1.2"/><path d="M9 3l1 3 3-1" fill="none" stroke="#3a6a6a"/></svg></div><div class="tx"><span class="cj">旋转</span> 3</div></div><div class="ti" style="top:329px"><div class="hd"></div><div class="a" style="left:18px;top:5px"><svg width="24" height="12"><g fill="none" stroke="#2a6a6a" stroke-width="1.1"><ellipse cx="8.5" cy="5" rx="2.3" ry="3.5"/><ellipse cx="13.5" cy="5" rx="2.3" ry="3.5"/><ellipse cx="18.5" cy="5" rx="2.3" ry="3.5"/></g><path d="M5 10h17" stroke="#2a6a6a" stroke-dasharray="1 1"/></svg></div><div class="tx"><span class="cj">切剪</span> <span class="cj">标识</span>1663</div></div><div class="ti" style="top:347px"><div class="hd"></div><div class="a" style="left:21px;top:1px"><svg width="17" height="16"><rect x="0" y="6" width="10" height="10" fill="#eeeee6"/><path d="M2 5l5-4 8 7-5 4z" fill="#9ae8ee" stroke="#3a7a8a" stroke-width=".9"/><path d="M10 12v4M15 8v4" stroke="#a0a0a0"/></svg></div><div class="tx"><span class="cj">倒角</span> 1</div></div><div class="ti" style="top:365px"><div class="hd"></div><div class="a" style="left:21px;top:1px"><svg width="16" height="16"><rect width="16" height="16" fill="#c6c6c6"/><path d="M1 2l1.5-1.5M5 2l1.5-1.5M9 2l1.5-1.5M13 2l1.5-1.5M1 6l1.5-1.5M5 6l1.5-1.5M9 6l1.5-1.5M13 6l1.5-1.5M1 10l1.5-1.5M5 10l1.5-1.5M9 10l1.5-1.5M13 10l1.5-1.5M1 14l1.5-1.5M5 14l1.5-1.5M9 14l1.5-1.5M13 14l1.5-1.5" stroke="#111" stroke-width="1.1"/><path d="M1 9l5-5 6 4 1 2" fill="none" stroke="#111" stroke-width="1.3"/></svg></div><div class="tx"><span class="cj">草绘</span> 8</div></div><div class="ti" style="top:383px"><div class="hd"></div><div class="pl"></div><div class="a" style="left:21px;top:1px"><svg width="18" height="16"><path d="M3 8l6-6M7 13l7-7" fill="none" stroke="#888" stroke-dasharray="1.2 1.2"/><path d="M10 1.2h4.8v5" fill="none" stroke="#222" stroke-width="1.3"/><rect x="1" y="8" width="6" height="6.5" fill="#a8f0f0" stroke="#3a7a7a" stroke-width="1.1"/></svg></div><div class="tx"><span class="cj">拉伸</span> 5</div></div><div class="ti" style="top:401px"><div class="hd"></div><div class="a" style="left:21px;top:1px"><svg width="16" height="16"><rect width="16" height="16" fill="#c6c6c6"/><path d="M1 2l1.5-1.5M5 2l1.5-1.5M9 2l1.5-1.5M13 2l1.5-1.5M1 6l1.5-1.5M5 6l1.5-1.5M9 6l1.5-1.5M13 6l1.5-1.5M1 10l1.5-1.5M5 10l1.5-1.5M9 10l1.5-1.5M13 10l1.5-1.5M1 14l1.5-1.5M5 14l1.5-1.5M9 14l1.5-1.5M13 14l1.5-1.5" stroke="#111" stroke-width="1.1"/><path d="M1 9l5-5 6 4 1 2" fill="none" stroke="#111" stroke-width="1.3"/></svg></div><div class="tx"><span class="cj">草绘</span> 9</div></div><div class="ti" style="top:419px"><div class="hd"></div><div class="pl"></div><div class="a" style="left:21px;top:2px"><svg width="18" height="14"><path d="M9.5 0v14" stroke="#222" stroke-dasharray="1.5 1.5"/><circle cx="4" cy="8" r="2.5" fill="none" stroke="#3a6a6a"/><path d="M10 6q2-2 4 0t0 5-4 0" fill="none" stroke="#3a6a6a" stroke-width="1.2"/><path d="M9 3l1 3 3-1" fill="none" stroke="#3a6a6a"/></svg></div><div class="tx"><span class="cj">旋转</span> 4</div></div><div class="ti" style="top:437px"><div class="hd"></div><div class="pl"></div><div class="a" style="left:21px;top:2px"><svg width="18" height="14"><path d="M9.5 0v14" stroke="#222" stroke-dasharray="1.5 1.5"/><circle cx="4" cy="8" r="2.5" fill="none" stroke="#3a6a6a"/><path d="M10 6q2-2 4 0t0 5-4 0" fill="none" stroke="#3a6a6a" stroke-width="1.2"/><path d="M9 3l1 3 3-1" fill="none" stroke="#3a6a6a"/></svg></div><div class="tx"><span class="cj">旋转</span> 5</div></div>
<div class="a sbv" style="left:202px;top:0px;width:15px;height:442px"></div>
<div class="a sbb" style="left:202px;top:2px;width:15px;height:15px"><svg width="15" height="15"><path d="M4 9l3.5-3.5L11 9" fill="none" stroke="#4a5a8a" stroke-width="2"/></svg></div>
<div class="a sbt" style="left:202px;top:46px;width:15px;height:349px"><svg width="15" height="349" style="position:absolute;left:0;top:0"><path d="M4 170h7M4 172h7M4 174h7M4 176h7" stroke="#eef2fe"/><path d="M4 171h7M4 173h7M4 175h7M4 177h7" stroke="#a8b8e8"/></svg></div>
<div class="a sbb" style="left:202px;top:425px;width:15px;height:15px"><svg width="15" height="15"><path d="M4 6l3.5 3.5L11 6" fill="none" stroke="#4a5a8a" stroke-width="2"/></svg></div>
</div>

<!-- right toolbar -->
<div class="a" style="left:914px;top:106px;width:108px;height:516px;background:#ece9d8"></div>
<div class="a" style="left:916px;top:110px;width:65px;height:2px;background:repeating-linear-gradient(90deg,#a5a294 0 1px,transparent 1px 3px)"></div><div class="a" style="left:985px;top:110px;width:36px;height:2px;background:repeating-linear-gradient(90deg,#a5a294 0 1px,transparent 1px 3px)"></div>
<div class="a btp" style="left:915px;top:119px;width:27px;height:27px"></div>
<div class="a ic" style="left:922px;top:124px"><svg width="14" height="18"><path d="M1 1v13l3-3 3 6 2-1-3-6h5z" fill="#1a1a72"/></svg></div>
<div class="a ic" style="left:962px;top:125px"><svg width="14" height="13"><path d="M1 1l12 11M13 1l-12 11" stroke="#1a1a72" stroke-width="2.2"/></svg></div>
<div class="a ic" style="left:987px;top:123px"><svg width="20" height="16"><path d="M1 11q4-10 9-3t9-2" fill="none" stroke="#b8b4a8" stroke-width="1.1"/><path d="M1 2h18M1 14h18" stroke="#cfccc0" stroke-dasharray="1 2"/></svg></div>
<div class="a ic" style="left:921px;top:153px"><svg width="15" height="15"><path d="M1 1l13 13" stroke="#1a1a72" stroke-width="2.2"/></svg></div>
<div class="a ic" style="left:920px;top:181px"><svg width="17" height="14"><rect x="1" y="1" width="15" height="12" fill="none" stroke="#1a1a72" stroke-width="2"/></svg></div>
<div class="a ic" style="left:920px;top:208px"><svg width="17" height="17"><circle cx="8.5" cy="8.5" r="7" fill="none" stroke="#1a1a72" stroke-width="2"/></svg></div>
<div class="a ic" style="left:920px;top:236px"><svg width="17" height="17"><path d="M1 2q13 1 14 14" fill="none" stroke="#1a1a72" stroke-width="2.2"/></svg></div>
<div class="a ic" style="left:917px;top:262px"><svg width="20" height="20"><path d="M7 1q-1 10 9 10" fill="none" stroke="#1a1a72" stroke-width="2.2"/><path d="M15 2v5M12.5 4.5h5" stroke="#888" stroke-width="1"/><path d="M1 13h10M7 9v11" stroke="#888" stroke-dasharray="1.5 1.5"/></svg></div>
<div class="a ic" style="left:919px;top:291px"><svg width="19" height="17"><path d="M1.5 8q2-7 5-4t3 5 4 6 4-4" fill="none" stroke="#1a1a72" stroke-width="2.3"/></svg></div>
<div class="a ic" style="left:923px;top:322px"><svg width="10" height="11"><path d="M1.5 1.5l7 8M8.5 1.5l-7 8" stroke="#1a2aa8" stroke-width="2.4"/></svg></div>
<div class="a ic" style="left:921px;top:349px"><svg width="14" height="14"><path d="M4.5 1.5h8v8" fill="none" stroke="#889" stroke-width="1"/><rect x="1.5" y="3.5" width="9" height="9" fill="none" stroke="#1a1a72" stroke-width="2"/></svg></div>
<div class="a ic" style="left:918px;top:376px"><svg width="20" height="15"><path d="M1.5 1v13M18.5 1v13M2 7h16" stroke="#1a1a72" stroke-width="1.8"/><path d="M2 7l4-3v6zM18 7l-4-3v6z" fill="#1a1a72"/></svg></div>
<div class="a ic" style="left:918px;top:403px"><svg width="20" height="19"><path d="M1 2h16M14 0v5M1 6h11" stroke="#1a1a72" stroke-width="1.4"/><path d="M1 17l5-5h8" fill="none" stroke="#1a1a72" stroke-width="2"/><circle cx="15" cy="12" r="2.2" fill="#fff" stroke="#1a1a72"/></svg></div>
<div class="a ic" style="left:919px;top:429px"><svg width="18" height="19"><rect x="1" y="1" width="16" height="17" fill="#fff" stroke="#1a1a72" stroke-width="1.3"/><rect x="1" y="1" width="16" height="3" fill="#1a1a72"/><path d="M6 8v6M3.5 14h5M10 15l3-5M12.5 15l3-5" stroke="#111" stroke-width="1.1"/></svg></div>
<div class="a ic" style="left:918px;top:458px"><svg width="21" height="20"><path d="M1 3h7M4 3v16M7 19l6-16 6 16M9 13h8" fill="none" stroke="#b8b4a8" stroke-width="2.2"/><path d="M1 3h7M4 3v16M7 19l6-16 6 16M9 13h8" fill="none" stroke="#f4f2ea" stroke-width=".8"/></svg></div>
<div class="a ic" style="left:918px;top:485px"><svg width="21" height="21"><ellipse cx="10" cy="10" rx="8.8" ry="6.2" transform="rotate(25 10 10)" fill="#c8ccd8" stroke="#1a1a72" stroke-width="1.5"/><circle cx="13" cy="9" r="1.8" fill="#eef" stroke="#1a1a72"/></svg></div>
<div class="a ic" style="left:917px;top:511px"><svg width="22" height="22"><path d="M5 16q-4-3-1-7t5 0-4 11" fill="none" stroke="#a84a2a" stroke-width="1.3"/><path d="M11 21V11h10" fill="none" stroke="#1a1a72" stroke-width="2.2"/><path d="M20 1l-7 7M13 8l1-4M13 8l4-1" stroke="#111" stroke-width="1.5"/><path d="M1 8h10" stroke="#556" stroke-dasharray="1 1.5"/></svg></div>
<div class="a ic" style="left:925px;top:540px"><svg width="13" height="19"><path d="M2 1v17" stroke="#b8b4a8" stroke-dasharray="2 1.5"/><path d="M5 7l6-4v10l-6 4z" fill="none" stroke="#b0aca0" stroke-width="1.3"/></svg></div>
<div class="a ic" style="left:920px;top:572px"><svg width="18" height="16"><path d="M1.5 8l5 6 10-12" fill="none" stroke="#1a1a72" stroke-width="2.6"/></svg></div>
<div class="a ic" style="left:987px;top:154px"><svg width="20" height="13"><path d="M6 1h13l-5 11h-13z" fill="none" stroke="#7a4e2e" stroke-width="1.7"/></svg></div>
<div class="a ic" style="left:990px;top:178px"><svg width="13" height="21"><path d="M12 1l-2 4M9 7l-2 4M6 13l-2 4M3 19l-1 2" stroke="#7a4e2e" stroke-width="1.8"/></svg></div>
<div class="a ic" style="left:986px;top:208px"><svg width="22" height="14"><path d="M1.5 13q2-9 6-7t6 2 7-6" fill="none" stroke="#7a4e2e" stroke-width="1.7"/></svg></div>
<div class="a ic" style="left:987px;top:235px"><svg width="18" height="18"><path d="M6 1l4 4M10 1l-4 4M1 10l4 4M5 10l-4 4M11 8l4 4M15 8l-4 4" stroke="#7a4e2e" stroke-width="1.6"/></svg></div>
<div class="a ic" style="left:986px;top:262px"><svg width="21" height="21"><path d="M3 1l2 3 2-3M5 4v2M2 15h4l-4 4h4" stroke="#556" fill="none" stroke-width="1"/><path d="M3 10h13M6 4l6 13M13 4l-6 13" stroke="#7a4e2e" stroke-width="1.4"/><path d="M16 8l4 4M20 8l-4 4" stroke="#556" stroke-width="1.2"/></svg></div>
<div class="a ic" style="left:988px;top:289px"><svg width="18" height="22"><path d="M8 1l2 3M10 6l2 3M1 7l4 4M5 7l-4 4" stroke="#7a4e2e" stroke-width="1.4"/><rect x="0.5" y="13.5" width="17" height="7" fill="#c8cc88" stroke="#8a8a5a"/><path d="M3 14v6M6 14v6M9 14v6M12 14v6M15 14v6" stroke="#eee8a8" stroke-width="1"/></svg></div>
<div class="a ic" style="left:986px;top:317px"><svg width="22" height="22"><path d="M3 17q-3-2 1-6l4-3q3-2 5 1t-2 5l-4 3q-3 2-4 0z M10 10q3-4 6-6t4 2-3 5-5 1" fill="none" stroke="#b8b4a8" stroke-width="1.6"/><path d="M1 21l3-3M19 1l2 2" stroke="#b8b4a8"/></svg></div>
<svg class="a" style="left:945px;top:158px" width="6" height="4"><path d="M0 0h6l-3 3.5z" fill="#000"/></svg>
<svg class="a" style="left:945px;top:214px" width="6" height="4"><path d="M0 0h6l-3 3.5z" fill="#000"/></svg>
<svg class="a" style="left:945px;top:242px" width="6" height="4"><path d="M0 0h6l-3 3.5z" fill="#000"/></svg>
<svg class="a" style="left:945px;top:270px" width="6" height="4"><path d="M0 0h6l-3 3.5z" fill="#000"/></svg>
<svg class="a" style="left:945px;top:326px" width="6" height="4"><path d="M0 0h6l-3 3.5z" fill="#000"/></svg>
<svg class="a" style="left:945px;top:354px" width="6" height="4"><path d="M0 0h6l-3 3.5z" fill="#000"/></svg>
<svg class="a" style="left:946px;top:522px" width="6" height="4"><path d="M0 0h6l-3 3.5z" fill="#000"/></svg>
<svg class="a" style="left:946px;top:550px" width="6" height="4"><path d="M0 0h6l-3 3.5z" fill="#000"/></svg>
<svg class="a" style="left:1013px;top:242px" width="6" height="4"><path d="M0 0h6l-3 3.5z" fill="#000"/></svg>

<div id="msg" class="a">
<div class="a" style="left:0;top:2px;width:1022px;height:91px;background:#ebe9e2"></div>
<div class="ml" style="top:12px">箭头点指向要删除的区域。选取反向或确定。</div>
<div class="ml" style="top:28px">所有元素已定义。请从对话框中选取元素或动作。</div>
<div class="ml" style="top:44px">警告：独立的切剪被发现了。</div>
<div class="ml" style="top:60px">不能相交带有特征的零件。</div>
<div class="ml" style="top:76px">所有元素已定义。请从对话框中选取元素或动作。</div>
<svg class="a" style="left:3px;top:12px" width="12" height="13"><path d="M1 4.5h4.5V1l5.5 5.5-5.5 5.5V8.5H1z" fill="#30d890" stroke="#102a1a" stroke-width="1.2" stroke-linejoin="round"/></svg>
<svg class="a" style="left:3px;top:28px" width="12" height="13"><path d="M1 4.5h4.5V1l5.5 5.5-5.5 5.5V8.5H1z" fill="#30d890" stroke="#102a1a" stroke-width="1.2" stroke-linejoin="round"/></svg>
<svg class="a" style="left:3px;top:76px" width="12" height="13"><path d="M1 4.5h4.5V1l5.5 5.5-5.5 5.5V8.5H1z" fill="#30d890" stroke="#102a1a" stroke-width="1.2" stroke-linejoin="round"/></svg>
<svg class="a" style="left:2px;top:44px" width="14" height="15"><path d="M7 1l6.5 13H0.5z" fill="#f8f040" stroke="#5a5a10" stroke-width="1.1" stroke-linejoin="round"/><path d="M7 5v5M7 11v2" stroke="#111" stroke-width="1.8"/></svg>
<svg class="a" style="left:3px;top:62px" width="12" height="13"><rect x="0.5" y="0.5" width="11" height="12" fill="#f0e840" stroke="#222"/><path d="M1 1l5 5.5-5 5.5z" fill="#30d0e8"/><path d="M9 1l-4.5 5.5 4.5 5.5" fill="none" stroke="#222" stroke-width="1.2"/></svg>
<div class="a" style="left:1007px;top:2px;width:14px;height:90px;background:linear-gradient(90deg,#f3f1ea,#fefefb)"></div>
<div class="a sbb" style="left:1007px;top:3px;width:14px;height:15px"><svg width="14" height="15"><path d="M3.5 9l3.5-3.5L10.5 9" fill="none" stroke="#4a5a8a" stroke-width="2"/></svg></div>
<div class="a sbt" style="left:1007px;top:64px;width:14px;height:13px"><svg width="14" height="13" style="position:absolute;left:0;top:0"><path d="M3 3h7M3 5h7M3 7h7M3 9h7" stroke="#a8b8e8"/></svg></div>
<div class="a sbb" style="left:1007px;top:78px;width:14px;height:14px"><svg width="14" height="14"><path d="M3.5 5l3.5 3.5L10.5 5" fill="none" stroke="#4a5a8a" stroke-width="2"/></svg></div>
<div class="a" style="left:413px;top:62px;font-family:'Liberation Serif',serif;font-weight:bold;font-size:21px;color:#e67878;letter-spacing:0.2px;white-space:pre">BBS.CHINADE.NET</div>
</div>
<!-- window borders -->
<div class="a" style="left:0;top:26px;width:1px;height:687px;background:#3a3a3a"></div>
<div class="a" style="left:1020px;top:26px;width:2px;height:687px;background:#3a3a3a"></div>
<div class="a" style="left:0;top:712px;width:1022px;height:1px;background:#3a3a3a"></div>


<!-- dialog -->
<div class="a" id="dlg" style="left:249px;top:119px;width:215px;height:170px;background:#7d98e0;border-radius:6px 6px 0 0;border:1px solid #4a64b8"></div>
<div class="a" style="left:250px;top:120px;width:213px;height:29px;background:linear-gradient(#9cb4ef,#7f9ce4 40%,#7895e0);border-radius:5px 5px 0 0"></div>
<div class="a" style="left:257px;top:129px;width:12px;height:12px;background:linear-gradient(135deg,#f0fff8 0 20%,#50d8d0 30%,#40c8c0);border:1px solid #10202a;border-radius:2px;box-shadow:inset -2px -1px 0 #2a9a98"></div>
<div class="a" style="left:275px;top:126px;color:#eef2ff;font-weight:bold;font-size:13px;letter-spacing:1.5px;white-space:pre">切剪：螺旋扫描</div>
<div class="a" style="left:438px;top:126px;width:19px;height:19px;background:linear-gradient(135deg,#c87880,#a05060);border:1px solid #f0e0e8;border-radius:3px"><svg width="17" height="17" style="position:absolute;left:0;top:0"><path d="M4 4l9 9M13 4l-9 9" stroke="#fff" stroke-width="2"/></svg></div>
<div class="a" style="left:252px;top:149px;width:208px;height:137px;background:#ece9d8"></div>
<div class="a" style="left:257px;top:154px;width:198px;height:85px;background:#fff;border:1px solid #a8a8a0"></div>
<div class="a" style="left:258px;top:155px;width:196px;height:13px;background:linear-gradient(#ebe9dc,#e0ddcc);border-bottom:1px solid #c8c4b0"></div>
<div class="a dt" style="left:275px;top:154px">元素</div>
<div class="a dt" style="left:379px;top:154px">信息</div>
<div class="a dt" style="left:275px;top:168px">属性</div>
<div class="a dt" style="left:379px;top:168px">不变的螺距</div>
<div class="a dt" style="left:262px;top:182px;font-family:'Liberation Mono',monospace">&gt;</div>
<div class="a dt" style="left:275px;top:182px">扫引轨迹</div>
<div class="a dt" style="left:379px;top:182px">改变</div>
<div class="a dt" style="left:275px;top:196px">螺距</div>
<div class="a dt" style="left:379px;top:196px;width:58px;overflow:hidden">节距 = 1.5</div>
<div class="a" style="left:258px;top:209px;width:180px;height:14px;overflow:hidden"><div class="a dt" style="left:17px;top:3px">截面</div><div class="a dt" style="left:121px;top:3px">已定义</div></div>
<div class="a" style="left:438px;top:169px;width:16px;height:54px;background:#f6f5f0"></div>
<div class="a sbb" style="left:438px;top:169px;width:15px;height:15px"><svg width="15" height="15"><path d="M4 9l3.5-3.5L11 9" fill="none" stroke="#4a5a8a" stroke-width="2"/></svg></div>
<div class="a sbt" style="left:438px;top:185px;width:15px;height:10px"><svg width="15" height="10" style="position:absolute;left:0;top:0"><path d="M4 3h7M4 5h7M4 7h7" stroke="#a8b8e8"/></svg></div>
<div class="a sbb" style="left:438px;top:206px;width:15px;height:15px"><svg width="15" height="15"><path d="M4 6l3.5 3.5L11 6" fill="none" stroke="#4a5a8a" stroke-width="2"/></svg></div>
<div class="a" style="left:258px;top:223px;width:180px;height:15px;background:#f6f5f0"></div>
<div class="a sbb" style="left:258px;top:223px;width:15px;height:15px"><svg width="15" height="15"><path d="M9 4l-3.5 3.5L9 11" fill="none" stroke="#4a5a8a" stroke-width="2"/></svg></div>
<div class="a sbt" style="left:274px;top:223px;width:84px;height:15px"><svg width="84" height="15" style="position:absolute;left:0;top:0"><path d="M40 4v7M42 4v7M44 4v7M46 4v7" stroke="#a8b8e8"/></svg></div>
<div class="a sbb" style="left:422px;top:223px;width:15px;height:15px"><svg width="15" height="15"><path d="M6 4l3.5 3.5L6 11" fill="none" stroke="#4a5a8a" stroke-width="2"/></svg></div>
<div class="a dbtn" style="left:259px;top:246px;background:#e8e6dc">定义</div>
<div class="a dbtn" style="left:259px;top:266px;border-color:#3a5aa8;box-shadow:inset 0 0 0 1px #b8c8f0">确定</div>
<div class="a dbtn" style="left:342px;top:246px">参照</div>
<div class="a dbtn" style="left:342px;top:266px">取消</div>
<div class="a dbtn" style="left:421px;top:246px">信息</div>
<div class="a dbtn" style="left:421px;top:266px">预览</div>
</body></html>
